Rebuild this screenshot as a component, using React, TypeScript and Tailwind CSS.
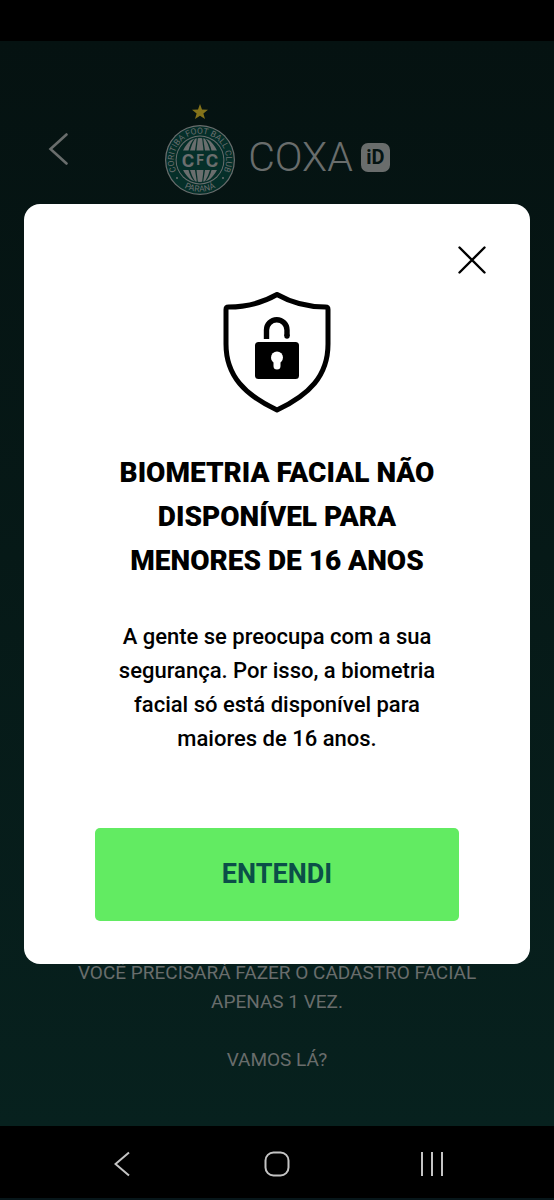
const recents = [1, 11, 21];

function Crest() {
  return (
    <svg viewBox="0 0 72 92" className="h-[92px] w-[72px]" aria-label="Coritiba Foot Ball Club">
      <defs>
        <path id="arc-top" d="M 13 69.500 A 26.200 26.200 0 1 1 59 69.500" />
        <path id="arc-bottom" d="M 8 72 A 31.800 31.800 0 0 0 64 72" />
        <clipPath id="ball">
          <circle cx="36" cy="57" r="22" />
        </clipPath>
      </defs>
      <path
        d="M36 1 L38 6.5 L44 6.8 L39.4 10.4 L41 16 L36 12.8 L31 16 L32.6 10.4 L28 6.8 L34 6.5 Z"
        fill="#84731a"
      />
      <circle cx="36" cy="57" r="35" fill="#6a6e6e" />
      <circle cx="36" cy="57" r="33.8" fill="#052f29" />
      <circle cx="36" cy="57" r="24.4" fill="#6a6e6e" />
      <circle cx="36" cy="57" r="23.4" fill="#052f29" />
      <g clipPath="url(#ball)" fill="#6a6e6e">
        <path d="M34 34 L38 34 L39.5 47.500 L32.5 47.500 Z" />
        <path d="M32 34 Q28 40 26 47.500 L31 47.500 L33 34 Z" />
        <path d="M40 34 Q44 40 46 47.500 L41 47.500 L39 34 Z" />
        <path d="M29 35 Q22 41 19 47.500 L24.5 47.500 Q26 40 31 35 Z" />
        <path d="M43 35 Q50 41 53 47.500 L47.5 47.500 Q46 40 41 35 Z" />
        <path d="M32.5 67 L39.5 67 L38 80 L34 80 Z" />
        <path d="M26 67 L31 67 L33 80 L32 80 Q28 74 26 67 Z" />
        <path d="M46 67 L41 67 L39 80 L40 80 Q44 74 46 67 Z" />
        <path d="M19 67 L24.5 67 Q26 74 31 79 L29 79 Q22 73 19 67 Z" />
        <path d="M53 67 L47.5 67 Q46 74 41 79 L43 79 Q50 73 53 67 Z" />
      </g>
      <g fill="#6a6e6e" fontFamily="Roboto, sans-serif" textAnchor="middle">
        <text x="36" y="64" fontSize="19" fontWeight="700">
          C<tspan fontSize="14" dx="2" dy="-2">F</tspan><tspan dx="2" dy="2">C</tspan>
        </text>
        <text fontSize="8.500">
          <textPath href="#arc-top" startOffset="50%">CORITIBA FOOT BALL CLUB</textPath>
        </text>
        <text fontSize="8.500">
          <textPath href="#arc-bottom" startOffset="50%">PARANÁ</textPath>
        </text>
      </g>
      <circle cx="13" cy="75" r="1" fill="#6a6e6e" />
      <circle cx="59" cy="75" r="1" fill="#6a6e6e" />
    </svg>
  );
}

function ShieldLock() {
  return (
    <svg viewBox="0 0 108 122" className="h-[122px] w-[108px]" aria-hidden="true">
      <path
        d="M54 2.500 Q76 15 102.500 15 Q105 15 105 17.500 V52 C105 84 86 103 54 118 C22 103 3 84 3 52 V17.500 Q3 15 5.500 15 Q32 15 54 2.500 Z"
        fill="none"
        stroke="#000"
        strokeWidth="5"
        strokeLinejoin="round"
      />
      <path
        d="M43.500 47 V38 A10.200 10.200 0 0 1 64 38 V44"
        fill="none"
        stroke="#000"
        strokeWidth="5.400"
      />
      <circle cx="64" cy="44" r="2.700" />
      <rect x="32" y="50" width="44" height="37" rx="3.500" />
      <circle cx="54" cy="65.500" r="6" fill="#fff" />
      <path d="M54 68 V74" stroke="#fff" strokeWidth="7" strokeLinecap="round" />
    </svg>
  );
}

function Modal() {
  return (
    <div className="absolute inset-0 flex items-center justify-center px-6">
      <section
        role="dialog"
        aria-labelledby="modal-title"
        className="flex w-full flex-col rounded-2xl bg-white pt-[42px] pb-[43px]"
      >
        <div className="flex justify-end px-11">
          <button type="button" aria-label="Fechar">
            <svg viewBox="0 0 28 28" className="size-7" stroke="#000" strokeWidth="2.4" strokeLinecap="round">
              <path d="M1.500 1.500 L26.500 26.500 M26.500 1.500 L1.500 26.500" />
            </svg>
          </button>
        </div>
        <div className="flex flex-col items-center px-[71px] pt-[18px] text-center">
          <ShieldLock />
          <h1
            id="modal-title"
            className="mt-[37px] px-4 text-[28px] leading-[44px] font-black text-black"
          >
            BIOMETRIA FACIAL NÃO DISPONÍVEL PARA MENORES DE 16 ANOS
          </h1>
          <p className="mt-[37px] px-4 text-[22px] leading-[34px] font-medium text-black">
            A gente se preocupa com a sua segurança. Por isso, a biometria facial só está disponível
            para maiores de 16 anos.
          </p>
          <button
            type="button"
            className="mt-[72px] h-[93px] w-full rounded-[5px] bg-[#62eb62] text-[27px] font-bold text-[#0b4f48]"
          >
            ENTENDI
          </button>
        </div>
      </section>
    </div>
  );
}

export default function App() {
  return (
    <div className="flex min-h-screen flex-col bg-black font-['Roboto',sans-serif]">
      <div className="h-[41px]" />
      <main className="relative flex flex-1 flex-col bg-linear-to-b from-[#051211] to-[#07211e] text-[#696d6c]">
        <header className="flex items-center justify-between px-12 pt-[62px]">
          <button type="button" aria-label="Voltar">
            <svg viewBox="0 0 20 32" className="h-8 w-5" fill="none" stroke="currentColor" strokeWidth="2.6" strokeLinecap="round">
              <path d="M18.500 1.500 L2.500 16 L18.500 30.500" />
            </svg>
          </button>
          <div className="flex items-center">
            <Crest />
            <div className="flex items-center gap-2 pt-4 pl-3">
              <span className="text-[41px] leading-none font-light">COXA</span>
              <span className="flex size-[29px] items-center justify-center rounded-[7px] bg-[#696d6c] text-[20px] leading-none font-bold text-[#051412]">
                iD
              </span>
            </div>
          </div>
          <div className="w-5" />
        </header>
        <div className="mt-auto px-[70px] pb-[52px] text-center text-[19px] leading-[29px]">
          <p>VOCÊ PRECISARÁ FAZER O CADASTRO FACIAL APENAS 1 VEZ.</p>
          <p className="mt-[29px]">VAMOS LÁ?</p>
        </div>
        <Modal />
      </main>
      <nav className="grid h-[72px] grid-cols-3 place-items-center px-11 pt-1 text-[#c4c4c4]">
        <button type="button" aria-label="Voltar no sistema">
          <svg viewBox="0 0 16 26" className="h-[26px] w-4" fill="none" stroke="currentColor" strokeWidth="2">
            <path d="M15 1.500 L1.500 13 L15 24.500" />
          </svg>
        </button>
        <button type="button" aria-label="Início">
          <svg viewBox="0 0 26 26" className="size-[26px]" fill="none" stroke="currentColor" strokeWidth="2">
            <rect x="1.500" y="1.500" width="23" height="23" rx="8" />
          </svg>
        </button>
        <button type="button" aria-label="Recentes">
          <svg viewBox="0 0 22 24" className="h-6 w-[22px]" stroke="currentColor" strokeWidth="2">
            {recents.map((x) => (
              <path key={x} d={`M${x} 0 V24`} />
            ))}
          </svg>
        </button>
      </nav>
      <div className="h-[2px] bg-[#07161a]" />
    </div>
  );
}
